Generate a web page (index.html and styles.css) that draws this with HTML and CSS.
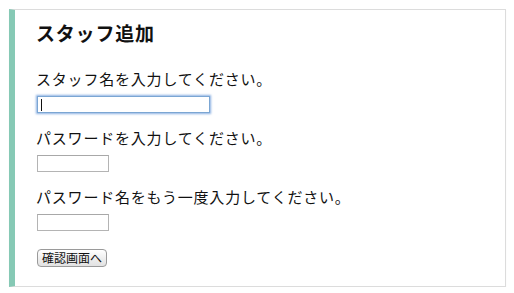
FILE: index.html
```html
<!DOCTYPE html>
<html lang="ja">
<head>
<meta charset="utf-8">
<title>スタッフ追加</title>
<link rel="stylesheet" href="styles.css">
</head>
<body>
<div class="card">
  <h1 class="title">スタッフ追加</h1>
  <form class="form">
    <label class="label l1">スタッフ名を入力してください。</label>
    <input class="field wide focused" type="text">
    <label class="label l2">パスワードを入力してください。</label>
    <input class="field" type="password">
    <label class="label l3">パスワード名をもう一度入力してください。</label>
    <input class="field" type="password">
    <button class="btn" type="button">確認画面へ</button>
  </form>
</div>
</body>
</html>
```
FILE: styles.css
```css
html, body {
  margin: 0;
  padding: 0;
  background: #ffffff;
}
body {
  font-family: "Noto Sans CJK JP", "Noto Sans", sans-serif;
  color: #111;
}
.card {
  margin: 9px 0 0 9px;
  width: 497px;
  height: 278px;
  border: 1px solid #dcdcdc;
  border-left: 6px solid #86c9b5;
  padding: 11px 0 0 21px;
  box-sizing: border-box;
  box-shadow: 0 1px 1px rgba(0,0,0,0.05);
}
.title {
  margin: 0;
  font-size: 19px;
  line-height: 24px;
  letter-spacing: 0.8px;
  font-weight: 700;
}
.form {
  display: flex;
  flex-direction: column;
  align-items: flex-start;
  margin-top: 24px;
}
.label {
  font-size: 15px;
  line-height: 20px;
  letter-spacing: 0.8px;
  display: block;
}
.l2, .l3 { margin-top: 15px; }
.field {
  margin: 7px 0 0 1px;
  width: 72px;
  height: 17px;
  box-sizing: border-box;
  border: 1px solid #b4b4b4;
  border-top-color: #a8a8a8;
  padding: 0;
  background: #fff;
  outline: none;
  font-size: 12px;
}
.wide {
  width: 173px;
}
.focused {
  border-color: #7ba6d3;
  box-shadow: 0 0 2px 1px rgba(100, 150, 215, 0.75);
  background-image: linear-gradient(#111, #111);
  background-size: 1px 12px;
  background-position: 3px 2px;
  background-repeat: no-repeat;
}
.btn {
  margin: 18px 0 0 1px;
  width: 70px;
  height: 18px;
  padding: 0;
  border: 1px solid #9a9a9a;
  border-radius: 4px;
  background: linear-gradient(#ffffff, #ececec 60%, #e2e2e2);
  font-family: "Noto Sans CJK JP", "Noto Sans", sans-serif;
  font-size: 12px;
  line-height: 16px;
  color: #111;
}
```
